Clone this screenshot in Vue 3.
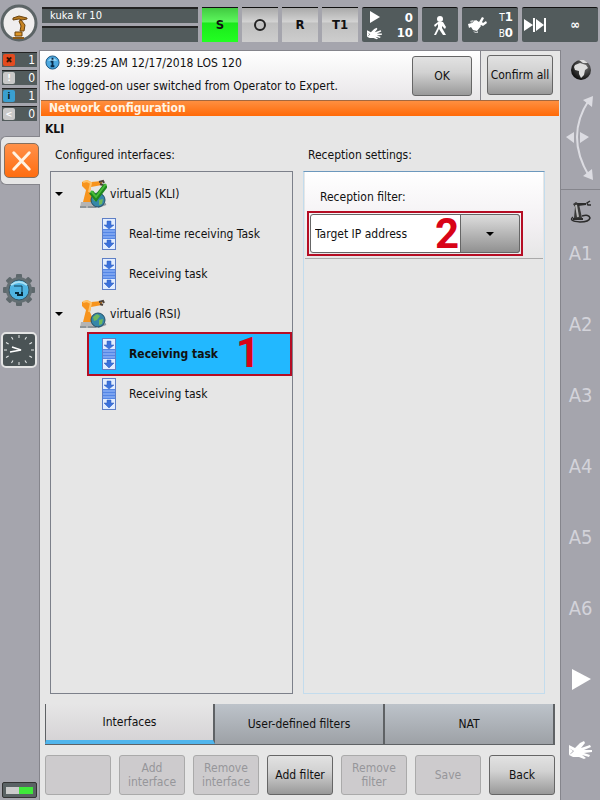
<template>
    <div class="pad">
        <header class="status-bar">
            <button class="logo" aria-label="Main menu">
                <svg viewBox="0 0 38 38" width="38" height="38">
                    <circle cx="19" cy="19" r="17" fill="#f0eeee" stroke="#5c6466" stroke-width="3" />
                    <path d="M13 14l6-2 8 2v1l-5 1-3-1-6 1z" fill="#b87b20" stroke="#6b430f" />
                    <path d="M21 16l4 5-1 6h-4l1-5-2-5z" fill="#c98523" stroke="#6b430f" />
                    <path d="M15 28h7v4h-7z" fill="#dc9426" stroke="#6b430f" />
                    <path d="M13 34h11" stroke="#8a5a18" stroke-width="2" />
                </svg>
            </button>
            <div class="names">
                <div>kuka kr 10</div>
                <div></div>
            </div>
            <button v-for="m in modes" :key="m" class="mode" :class="{ on: m === 'S' }" :aria-label="m">
                <span v-if="m === 'O'" class="circle"></span>
                <span v-else>{{ m }}</span>
            </button>
            <div class="dark speed">
                <svg viewBox="0 0 18 32" width="18" height="32" fill="#fff">
                    <path d="M3 2l10 6-10 6z" />
                    <g transform="translate(0 18) scale(0.65)"><path :d="handPath" /></g>
                </svg>
                <div><b>0</b><b>10</b></div>
            </div>
            <div class="dark walk">
                <svg viewBox="0 0 20 24" width="20" height="24" fill="#fff">
                    <circle cx="10" cy="6" r="3" />
                    <path d="M8 9h5l3 5-1 2-3-3v2l4 7h-3l-4-6-3 6H4l4-8v-3l-3 3-1-2z" />
                </svg>
            </div>
            <div class="dark tool">
                <svg viewBox="0 0 20 20" width="20" height="20" fill="#fff">
                    <path d="M1 9l4-1 3-3 6 6-4 5-4-1-2-3-2 1zM9 5l3 2 3-5 2 1-2 4 1 1 3-2 1 2-4 3-2-1-2 2-4-4z" />
                    <path d="M3 6l3-1 1 1-3 2zM6 16l3 1 2-1v2H8z" fill="#bfc3c4" />
                </svg>
                <div>
                    <span><small>T</small><b>1</b></span>
                    <span><small>B</small><b>0</b></span>
                </div>
            </div>
            <div class="dark step">
                <svg viewBox="0 0 24 16" width="24" height="16" fill="#fff">
                    <path d="M0 2l9 6-9 6zM9 1h2v14H9zM12 2l8 6-8 6zM20 1h2v14h-2z" />
                </svg>
                <b>∞</b>
            </div>
        </header>

        <aside class="left-bar">
            <div v-for="(c, index) in counters" :key="index" class="counter" :class="c.type">
                <i>{{ c.icon }}</i><span>{{ c.count }}</span>
            </div>
            <div class="active-tab">
                <button aria-label="Close">
                    <svg viewBox="0 0 34 34" width="33" height="33" stroke="#fff4e4" stroke-width="3" stroke-linecap="round">
                        <path d="M9 9l16 17M25 9L9 26" />
                    </svg>
                </button>
            </div>
            <svg class="gear" viewBox="0 0 34 34" width="34" height="34">
                <g fill="#5e686c">
                    <rect v-for="n in 4" :key="n" x="14" y="1" width="6" height="32" rx="1" :transform="`rotate(${n * 45} 17 17)`" />
                </g>
                <circle cx="17" cy="17" r="13" fill="#646f73" />
                <circle cx="17" cy="17" r="10" fill="#4fb4e2" stroke="#365868" />
                <path d="M9 12q8-6 16 0" stroke="#a9e0f5" stroke-width="2" fill="none" />
                <path d="M12 13h8v6" stroke="#0d3d54" fill="none" />
                <path d="M13 20h3v2h4v-3" stroke="#082b3b" stroke-width="2" fill="none" />
            </svg>
            <svg class="clock" viewBox="0 0 36 36" width="36" height="36">
                <rect x="1" y="1" width="34" height="34" rx="4" fill="#4a5355" stroke="#e4e4e4" stroke-width="2" />
                <g stroke="#e6e9e9" stroke-width="1">
                    <path v-for="n in 12" :key="n" d="M18 3v3" :transform="`rotate(${n * 30} 18 18)`" />
                </g>
                <path d="M11 15l9 3-11 2" fill="none" stroke="#fff" stroke-width="1.5" />
            </svg>
            <div class="battery"><span></span></div>
        </aside>

        <main class="main">
            <section class="message">
                <div class="message-text">
                    <p>
                        <svg viewBox="0 0 16 16" width="15" height="15">
                            <circle cx="8" cy="8" r="7" fill="#4da9e0" stroke="#17527e" />
                            <path d="M3 6q5-5 10 0" fill="#a6dcf8" />
                            <path d="M8 3v2M6 7h2v5M6 12h4" stroke="#082b48" stroke-width="2" fill="none" />
                        </svg>
                        9:39:25 AM 12/17/2018 LOS 120
                    </p>
                    <p>The logged-on user switched from Operator to Expert.</p>
                </div>
                <button class="btn ok">OK</button>
                <div class="confirm"><button class="btn">Confirm all</button></div>
            </section>

            <h1>Network configuration</h1>
            <h2>KLI</h2>

            <div class="columns">
                <section class="interfaces">
                    <h3>Configured interfaces:</h3>
                    <div class="tree">
                        <template v-for="group in groups" :key="group.name">
                            <div class="row group">
                                <span class="caret"></span>
                                <svg viewBox="0 0 28 30" width="28" height="30">
                                    <path d="M2 23h14l2 6H1z" fill="#b4b4b4" />
                                    <path d="M1 28h6M9 28h8M19 28l8-3" stroke="#8e959a" stroke-width="2" />
                                    <path d="M3 3l5-2 4 2 11-1v4l-11 2-1 5 4 10H4l3-12-4-4z" fill="#f7941d" />
                                    <path d="M4 3l4-1 4 2-2 9" fill="none" stroke="#ffc369" stroke-width="2" />
                                    <path d="M20 3l4-1 1 2M21 5l3 1" fill="none" stroke="#4c4038" stroke-width="2" />
                                    <circle cx="19" cy="21" r="7" fill="#3587a9" stroke="#244e67" />
                                    <path d="M14 18l4-3 3 2-3 4-3 1zM20 21l4-1-1 5-3 1z" fill="#70b85b" />
                                    <path v-if="group.ok" d="M12 13l5 6L27 6" fill="none" stroke="#1d861e" stroke-width="5" />
                                    <path v-if="group.ok" d="M12 12l5 6L27 5" fill="none" stroke="#48bb37" stroke-width="2" />
                                </svg>
                                {{ group.name }}
                            </div>
                            <div v-for="(task, index) in group.tasks" :key="index" class="row task" :class="{ selected: task.selected }">
                                <svg viewBox="0 0 14 32" width="14" height="32">
                                    <rect x="0.5" y="0.5" width="13" height="31" fill="#e2edff" stroke="#5e7fc6" />
                                    <path d="M1 11h12v10H1z" fill="#5486e6" />
                                    <path d="M1 13h12M1 16h12M1 19h12" stroke="#a4c2fb" />
                                    <path d="M5 3h4v4h3l-5 4-5-4h3zM5 22h4v3h3l-5 5-5-5h3z" fill="#3c72dc" stroke="#2f5cb8" stroke-width="0.5" />
                                </svg>
                                {{ task.name }}
                                <span v-if="task.selected" class="mark mark-one">1</span>
                            </div>
                        </template>
                    </div>
                </section>

                <section class="reception">
                    <h3>Reception settings:</h3>
                    <div class="settings">
                        <div class="filter">
                            <label for="filter">Reception filter:</label>
                            <div class="select">
                                <select id="filter" v-model="filter">
                                    <option>Target IP address</option>
                                </select>
                                <span class="drop"><span class="caret"></span></span>
                                <span class="mark mark-two">2</span>
                            </div>
                        </div>
                    </div>
                </section>
            </div>

            <nav class="tabs">
                <button v-for="tab in tabs" :key="tab" :class="{ active: tab === activeTab }" @click="activeTab = tab">
                    {{ tab }}
                </button>
            </nav>
            <footer class="actions">
                <button v-for="(action, index) in actions" :key="index" class="btn" :disabled="!action.enabled">
                    {{ action.text }}
                </button>
            </footer>
        </main>

        <aside class="right-bar">
            <div class="jog">
                <svg viewBox="0 0 40 139" width="40" height="139">
                    <defs>
                        <radialGradient id="ball" cx="0.65" cy="0.3" r="0.7">
                            <stop offset="0" stop-color="#777" />
                            <stop offset="1" stop-color="#111" />
                        </radialGradient>
                    </defs>
                    <circle cx="20" cy="20" r="10" fill="url(#ball)" />
                    <path d="M14 15l5-2 6 2 2 3-3 2-1 5-3 3-2-4v-3l-4-1-1-3zM18 10l5 0 4 3-5 0z" fill="#ddd" />
                    <path d="M28 50q-24 36 0 76" fill="none" stroke="#dcdce2" stroke-width="2" />
                    <path d="M32 46l-1 11-9-7zM32 130l-1-11-9 7z" fill="#dcdce2" />
                    <path d="M13 82v11l-8-6zM19 82v11l9-6z" fill="#dcdce2" />
                </svg>
            </div>
            <div class="robot">
                <svg viewBox="0 0 24 24" width="24" height="24">
                    <path d="M5 17q-5 4 7 5 9 0 10-4-1-4-8-2" fill="none" stroke="#2c2c2c" stroke-width="1.5" />
                    <path d="M5 4l3-2 3 2 3 14H6l1-11z" fill="#3a3a3a" />
                    <path d="M8 5l2 12" stroke="#b5b5b5" stroke-width="2" />
                    <path d="M9 3l9 0v2l-8 1zM5 18h10v2H5z" fill="#2c2c2c" />
                    <path d="M22 1l-3 2 1 2h3" fill="none" stroke="#2c2c2c" stroke-width="1.5" />
                </svg>
            </div>
            <div v-for="n in 6" :key="n" class="axis">A{{ n }}</div>
            <button class="axis" aria-label="Start">
                <svg viewBox="0 0 20 22" width="20" height="22" fill="#fff"><path d="M1 1l19 10L1 22z" /></svg>
            </button>
            <button class="axis" aria-label="Jog">
                <svg viewBox="0 0 23 20" width="23" height="20" fill="#fff"><path :d="handPath" /></svg>
            </button>
        </aside>
    </div>
</template>

<script setup>
import { ref } from 'vue'

const handPath = 'M0 5l6 3 5-5 4-2 1 2-4 5 9-3 1 2-7 3 8 0v2l-8 1 6 2-1 2-7-2 4 3-2 1-5-2-6 0-4-2 3-2 2-2-5-3zM0 8l4 3-4 4z'

const modes = ['S', 'O', 'R', 'T1']

const counters = [
    { type: 'error', icon: '✖', count: 1 },
    { type: 'warning', icon: '!', count: 0 },
    { type: 'info', icon: 'i', count: 1 },
    { type: 'wait', icon: '<', count: 0 },
]

const groups = [
    {
        name: 'virtual5 (KLI)',
        ok: true,
        tasks: [{ name: 'Real-time receiving Task' }, { name: 'Receiving task' }],
    },
    {
        name: 'virtual6 (RSI)',
        tasks: [{ name: 'Receiving task', selected: true }, { name: 'Receiving task' }],
    },
]

const tabs = ['Interfaces', 'User-defined filters', 'NAT']
const activeTab = ref('Interfaces')
const filter = ref('Target IP address')

const actions = [
    { text: '' },
    { text: 'Add interface' },
    { text: 'Remove interface' },
    { text: 'Add filter', enabled: true },
    { text: 'Remove filter' },
    { text: 'Save' },
    { text: 'Back', enabled: true },
]
</script>

<style>
body {
    margin: 0;
}
</style>

<style scoped>
* {
    box-sizing: border-box;
}

.pad {
    display: grid;
    grid-template-columns: 40px 1fr 40px;
    grid-template-rows: 50px 1fr;
    min-height: 100vh;
    background: #a5a5ad;
    font-family: 'DejaVu Sans Condensed', 'Noto Sans', sans-serif;
    font-size: 12px;
    line-height: 14px;
    color: #111;
}

button,
select {
    font: inherit;
    color: inherit;
    border: none;
    padding: 0;
    margin: 0;
    border-radius: 0;
}

p,
h1,
h2,
h3 {
    margin: 0;
    font-size: 12px;
    font-weight: normal;
}

svg {
    display: block;
    flex: none;
}

.status-bar {
    grid-column: 1 / 4;
    display: flex;
    gap: 4px;
    padding: 7px 2px 8px 0;
}

.logo {
    width: 38px;
    height: 38px;
    margin-top: -3px;
    background: none;
}

.names {
    flex: 1;
    display: grid;
    grid-template-rows: 16px 16px;
    gap: 3px;
    color: #fff;
    font-size: 11px;
}

.names div {
    padding-left: 8px;
    background: #525b5c;
    border-top: 2px solid #222;
}

.mode {
    width: 36px;
    display: flex;
    align-items: center;
    justify-content: center;
    background: linear-gradient(#aaa, #d2d2d2 40%, #bfbfbf 45%, #cdcdcd);
    border-top: 1px solid #111;
    font-size: 13px;
    font-weight: bold;
}

.mode.on {
    background: linear-gradient(#41ca41, #5cf65c 40%, #1be91b 45%, #22ff22);
}

.circle {
    width: 12px;
    height: 12px;
    border: 2px solid #222;
    border-radius: 50%;
}

.dark {
    display: flex;
    align-items: center;
    justify-content: space-between;
    padding: 0 5px;
    background: #525b5c;
    border-top: 1px solid #111;
    border-radius: 2px;
    color: #fff;
    font-size: 13px;
}

.dark div {
    display: flex;
    flex-direction: column;
    line-height: 15px;
    text-align: right;
}

.dark small {
    font-size: 10px;
}

.speed,
.tool {
    width: 56px;
}

.walk {
    width: 36px;
    justify-content: center;
}

.step {
    width: 76px;
    padding: 0 18px 0 2px;
}

.left-bar {
    display: flex;
    flex-direction: column;
    padding-top: 2px;
    border-right: 1px solid #85858c;
}

.counter {
    display: flex;
    justify-content: space-between;
    align-items: center;
    height: 15px;
    margin: 0 2px 3px;
    padding: 0 2px 0 1px;
    background: #525b5c;
    border-top: 1px solid #222;
    color: #fff;
}

.counter i {
    width: 12px;
    height: 12px;
    border-radius: 2px;
    background: #c8c8c8;
    font-size: 9px;
    font-style: normal;
    font-weight: bold;
    line-height: 12px;
    text-align: center;
}

.counter.error i {
    background: #e34b20;
    color: #310;
}

.counter.info i {
    background: #3a9fd0;
    color: #012;
}

.active-tab {
    height: 49px;
    margin: 12px -1px 0 0;
    padding: 6px 0 0 3px;
    background: #e6e6e6;
    border: 1px solid #85858c;
    border-right: none;
    border-radius: 6px 0 0 6px;
}

.active-tab button {
    width: 35px;
    height: 35px;
    border: 1px solid #85705f;
    border-radius: 5px;
    background: linear-gradient(#ff914a, #ff6d10);
}

.gear {
    margin: 88px 0 0 2px;
}

.clock {
    margin: 25px 0 0 1px;
}

.battery {
    height: 16px;
    margin: auto 2px 2px;
    padding: 4px 3px;
    background: #5a6264;
    border: 1px solid #333;
    border-radius: 2px;
}

.battery span {
    display: block;
    height: 7px;
    background: linear-gradient(90deg, #ccc 50%, #3fe83b 50%);
}

.main {
    display: flex;
    flex-direction: column;
    min-width: 0;
    background: #e6e6e6;
}

.message {
    display: flex;
    height: 50px;
    background: linear-gradient(#fff, #e8e6e8);
    border-top: 1px solid #85858c;
}

.message-text {
    flex: 1;
    padding: 0 0 2px 5px;
    white-space: nowrap;
}

.message-text p {
    display: flex;
    align-items: center;
    gap: 6px;
    height: 23px;
}

.btn {
    height: 40px;
    border: 1px solid #666;
    border-radius: 3px;
    background: linear-gradient(#e2e2e2, #d2d2d2 40%, #999);
}

.ok {
    width: 60px;
    margin: 5px 8px 0 0;
}

.confirm {
    width: 80px;
    padding: 4px 7px 0 6px;
    background: #e6e6e6;
    border-left: 1px solid #85858c;
}

.confirm .btn {
    width: 66px;
    white-space: nowrap;
}

h1 {
    height: 16px;
    margin: 0 1px;
    padding-left: 8px;
    border-top: 1px solid #a5683f;
    background: linear-gradient(#ff8f40, #ff6a08);
    color: #fff4e4;
    font-weight: bold;
    line-height: 15px;
}

h2 {
    padding: 6px 5px;
    font-weight: bold;
}

.columns {
    flex: 1;
    display: grid;
    grid-template-columns: 243fr 242fr;
    gap: 10px;
    padding: 6px 15px 10px 10px;
}

.columns section {
    display: flex;
    flex-direction: column;
}

h3 {
    height: 23px;
    padding-left: 5px;
}

.tree {
    flex: 1;
    padding-top: 2px;
    border: 1px solid #7c808a;
}

.row {
    position: relative;
    display: flex;
    align-items: center;
    height: 40px;
}

.group {
    gap: 3px;
    padding-left: 4px;
}

.group svg {
    margin-left: 13px;
}

.caret {
    border: 4px solid transparent;
    border-top-color: #000;
    border-bottom: none;
}

.task {
    gap: 13px;
    margin: 0 2px 0 38px;
    padding-left: 13px;
}

.selected {
    background: #22b8ff;
    font-weight: bold;
    outline: 2px solid #b50d24;
}

.mark {
    position: absolute;
    color: #d80418;
    font-family: Roboto, sans-serif;
    font-size: 42px;
    font-weight: bold;
    line-height: 42px;
}

.mark-one {
    top: -2px;
    left: 147px;
}

.mark-two {
    top: 0;
    right: 62px;
}

.settings {
    flex: 1;
    padding: 0 1px;
    border: 1px solid #c3dced;
    border-top-color: #6c98bd;
}

.filter {
    height: 87px;
    padding: 18px 22px 0 4px;
    background: linear-gradient(#fff, #f3f0f3 60%, #e6e6e6);
    border-bottom: 1px solid #aaa;
}

.filter label {
    display: block;
    height: 23px;
    padding-left: 11px;
}

.select {
    position: relative;
    display: flex;
    height: 41px;
    padding: 1px;
    outline: 2px solid #b50d24;
}

.select select {
    width: 100%;
    padding: 0 62px 0 4px;
    appearance: none;
    background: #fff;
    border: 1px solid #666;
    border-radius: 3px;
}

.drop {
    position: absolute;
    top: 1px;
    right: 1px;
    bottom: 1px;
    width: 60px;
    display: flex;
    align-items: center;
    justify-content: center;
    background: linear-gradient(#ddd, #919191);
    border: 1px solid #666;
    border-radius: 0 3px 3px 0;
    pointer-events: none;
}

.tabs {
    display: grid;
    grid-template-columns: repeat(3, 1fr);
    height: 41px;
    margin: 0 5px;
    border-bottom: 1px solid #5f6265;
}

.tabs button {
    background: linear-gradient(#bdc3ca, #9da1a6);
    border-right: 2px solid #5f6265;
}

.tabs .active {
    background: linear-gradient(#e6e6e6, #d6d4d6);
    border-left: 1px solid #5f6265;
    border-bottom: 4px solid #50b5ec;
}

.actions {
    display: grid;
    grid-template-columns: repeat(7, 1fr);
    gap: 8px;
    padding: 10px 5px 5px;
}

.btn:disabled {
    color: #96969a;
    background: #cdcbcd;
    border-color: #aaa;
}

.right-bar {
    display: flex;
    flex-direction: column;
    border-left: 1px solid #85858c;
}

.jog {
    height: 140px;
    border-bottom: 1px solid #85858c;
}

.robot {
    height: 27px;
    padding: 10px 0 0 7px;
}

.axis {
    display: flex;
    align-items: center;
    justify-content: center;
    height: 71px;
    background: none;
    color: #d3d3da;
    font-size: 20px;
}
</style>
